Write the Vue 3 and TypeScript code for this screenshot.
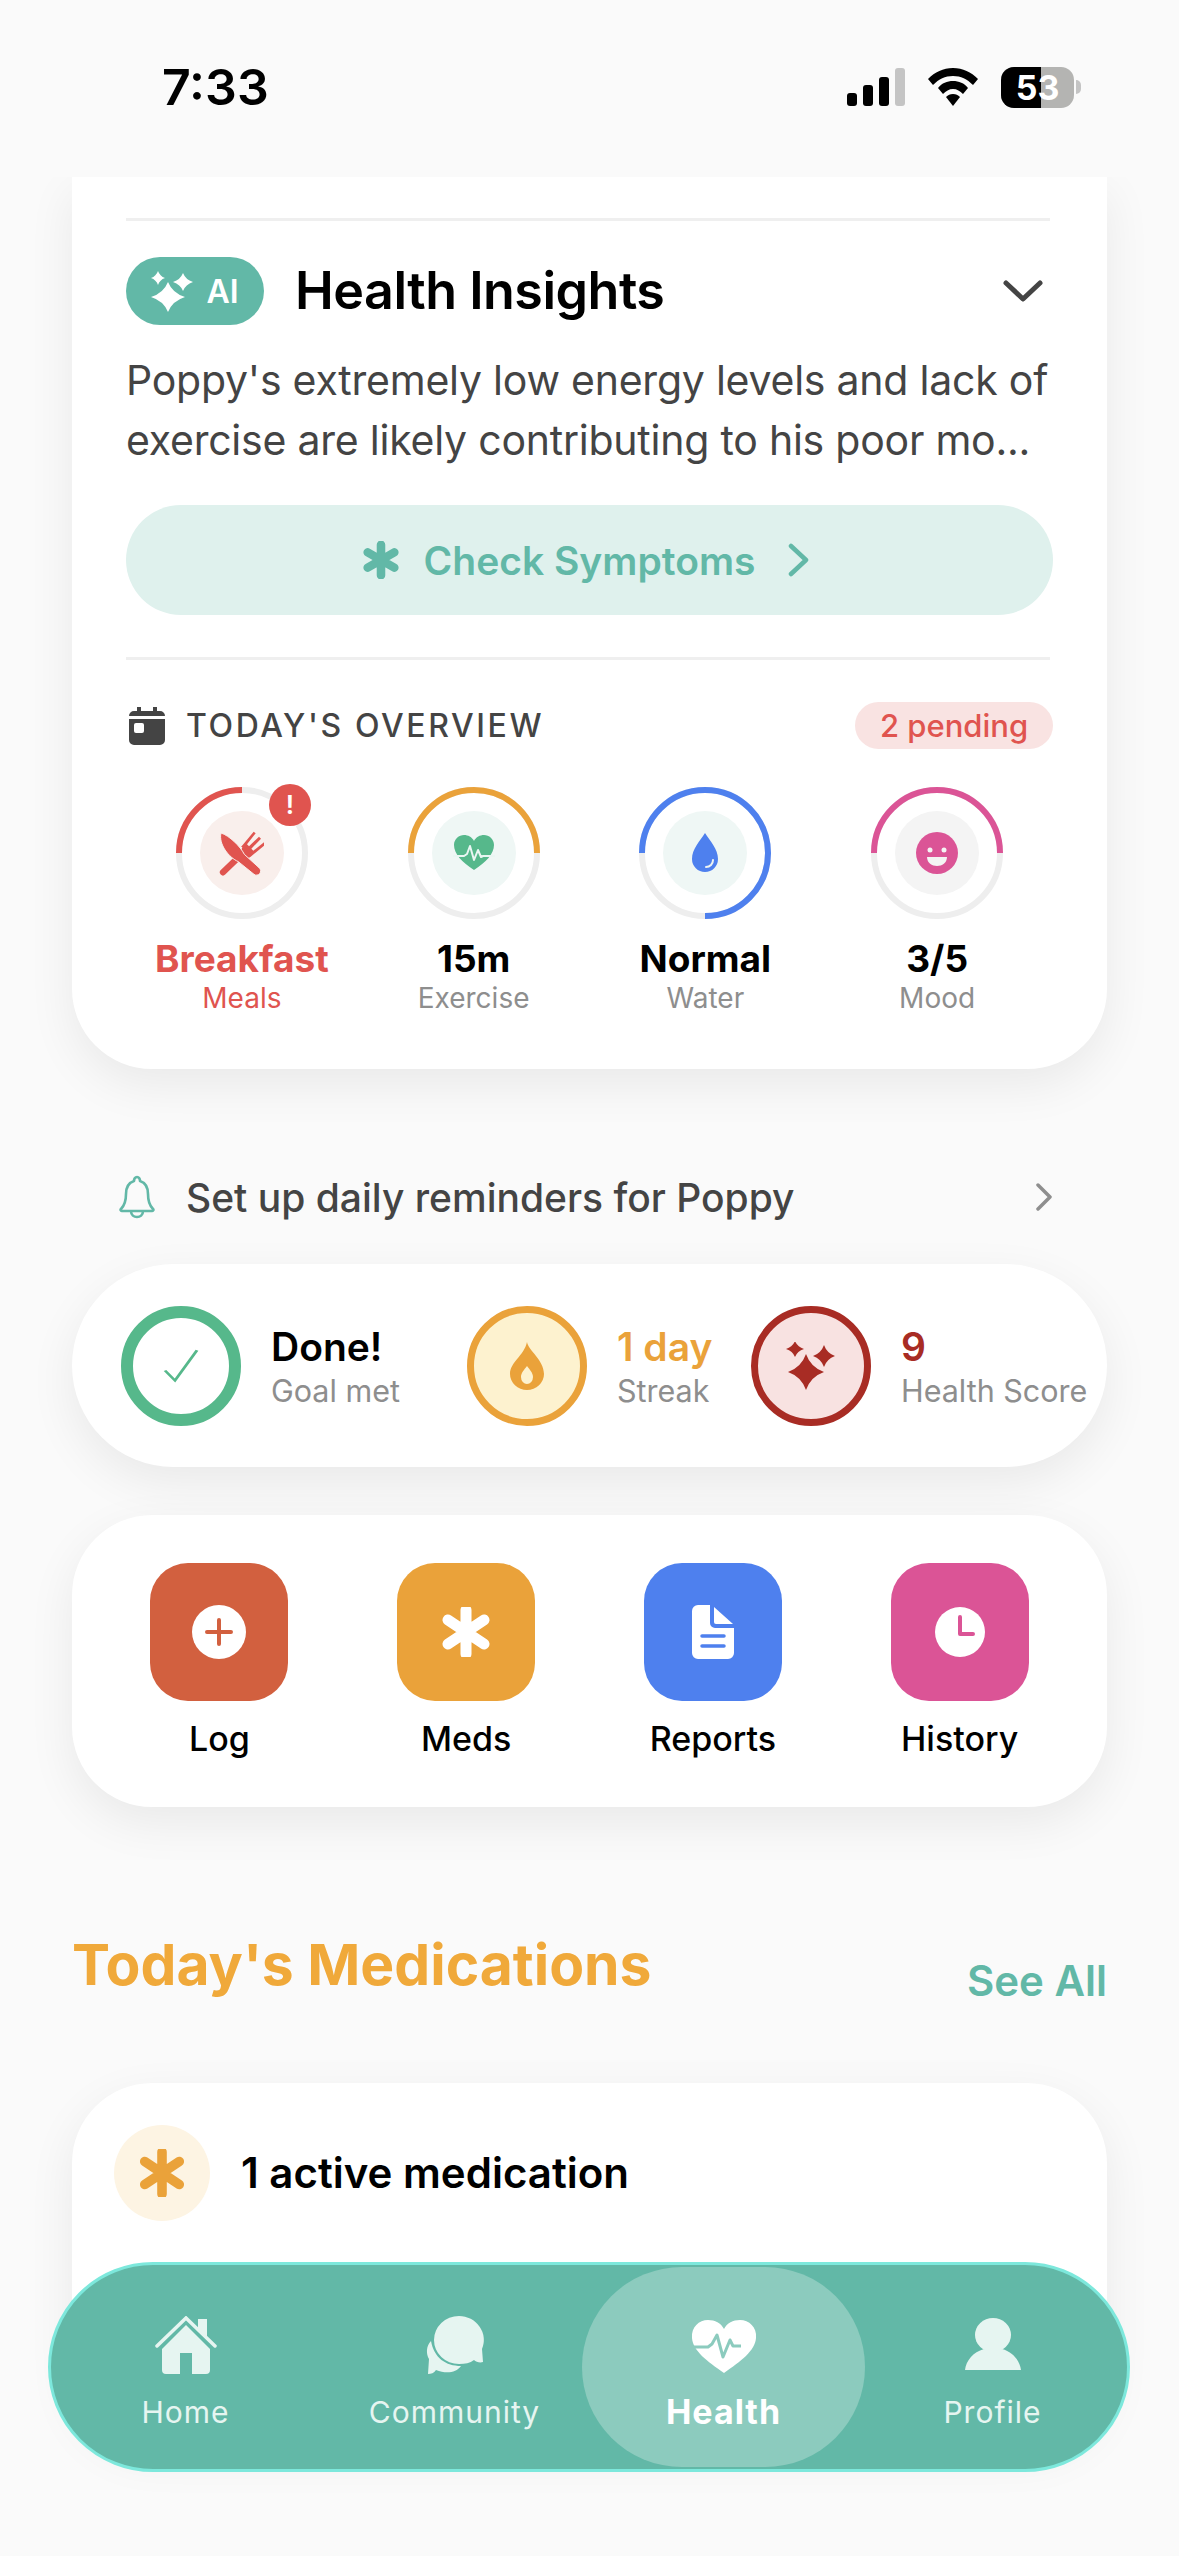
<template>
  <div class="phone">
    <header class="status-bar">
      <span class="time">7:33</span>
      <div class="status-icons">
        <svg class="signal" viewBox="0 0 58 38" width="58" height="38">
          <rect x="0" y="25" width="10" height="13" rx="3" fill="#000" />
          <rect x="16" y="17" width="10" height="21" rx="3" fill="#000" />
          <rect x="32" y="9" width="10" height="29" rx="3" fill="#000" />
          <rect x="48" y="0" width="10" height="38" rx="3" fill="#c4c4c4" />
        </svg>
        <svg class="wifi" viewBox="0 0 52 38" width="52" height="38">
          <path d="M26 0C16 0 8 4 1 11l5 6c6-6 12-9 20-9s14 3 20 9l5-6C44 4 36 0 26 0Z" fill="#000" />
          <path d="M26 13c-6 0-11 2-15 7l5 6c3-3 6-5 10-5s7 2 10 5l5-6c-4-5-9-7-15-7Z" fill="#000" />
          <path d="M26 26c-3 0-5 1-7 3l7 9 7-9c-2-2-4-3-7-3Z" fill="#000" />
        </svg>
        <div class="battery">
          <div class="battery-body">
            <span class="battery-fill"></span>
            <span class="battery-num">53</span>
          </div>
          <span class="battery-tip"></span>
        </div>
      </div>
    </header>

    <main class="scroller">
      <section class="card insights-card">
        <hr class="divider">
        <div class="insights-head">
          <span class="ai-pill">
            <svg viewBox="0 0 42 41" width="42" height="41">
              <path :d="star(17, 26, 17, 15)" fill="#fff" />
              <path :d="star(7, 7, 7, 7)" fill="#fff" />
              <path :d="star(32, 11, 10, 9)" fill="#fff" />
            </svg>
            AI
          </span>
          <h2>Health Insights</h2>
          <svg class="chevron-down" viewBox="0 0 40 24" width="40" height="24">
            <path d="M3 4l17 16L37 4" fill="none" stroke="#444" stroke-width="5" stroke-linecap="round" stroke-linejoin="round" />
          </svg>
        </div>
        <p class="insights-text">
          Poppy's extremely low energy levels and lack of exercise are likely contributing to his poor mo...
        </p>
        <button class="symptoms-btn">
          <svg viewBox="0 0 40 40" width="38" height="38">
            <g stroke="#62b8a7" stroke-width="9" stroke-linecap="round">
              <path d="M20 4v32M6 12l28 16M34 12L6 28" />
            </g>
          </svg>
          <span>Check Symptoms</span>
          <svg class="btn-chevron" viewBox="0 0 24 34" width="24" height="34">
            <path d="M4 3l15 14L4 31" fill="none" stroke="#62b8a7" stroke-width="4.5" stroke-linecap="round" stroke-linejoin="round" />
          </svg>
        </button>
        <hr class="divider second">
        <div class="overview-head">
          <svg viewBox="0 0 36 38" width="36" height="38">
            <path d="M8 0h4v4h12V0h4v4h3a5 5 0 0 1 5 5v24a5 5 0 0 1-5 5H5a5 5 0 0 1-5-5V9a5 5 0 0 1 5-5h3Z" fill="#444" />
            <rect x="0" y="9" width="36" height="3" fill="#fff" />
            <rect x="5" y="16" width="10" height="10" rx="2" fill="#fff" />
          </svg>
          <h3>TODAY'S OVERVIEW</h3>
          <span class="pending">2 pending</span>
        </div>
        <div class="rings">
          <div v-for="ring in rings" :key="ring.label" class="ring-item" :class="{ alert: ring.alert }">
            <div class="ring">
              <svg class="ring-track" viewBox="0 0 132 132" width="132" height="132">
                <circle cx="66" cy="66" r="63" fill="none" stroke="#eeeeee" stroke-width="6" />
                <circle
                  cx="66"
                  cy="66"
                  r="63"
                  fill="none"
                  :stroke="ring.color"
                  stroke-width="6"
                  pathLength="100"
                  :stroke-dasharray="`${ring.progress} 100`"
                  transform="rotate(180 66 66)"
                />
              </svg>
              <div class="ring-inner" :class="ring.tint">
                <svg v-if="ring.icon === 'meal'" viewBox="0 0 135 135" width="45" height="45">
                  <path d="M12 124L72 66" stroke="#e0544f" stroke-width="19" stroke-linecap="round" />
                  <path d="M66 48L104 2l6 5-26 33 6 6 30-29 6 6-29 30 6 6 33-26 5 6-46 38c-8 6-16 4-22-2s-8-14-3-27Z" fill="#e0544f" />
                  <path d="M6 6c25 8 58 40 70 64l44 40a11 11 0 0 1-15 20L58 92C30 80-2 40 6 6Z" fill="#e0544f" stroke="#f9efec" stroke-width="3" />
                </svg>
                <svg v-else-if="ring.icon === 'heart'" viewBox="0 0 44 36" width="44" height="36">
                  <path d="M22 35C10 27 2 19 2 10 2 4 7 0 12 0c4 0 8 2 10 6 2-4 6-6 10-6 5 0 10 4 10 10 0 9-8 17-20 25Z" fill="#56b88b" />
                  <path d="M1 21h11l3-2 3-8 4 14 4-10 3 7 2-1h12" fill="none" stroke="#e9f6f2" stroke-width="2" stroke-linejoin="round" />
                </svg>
                <svg v-else-if="ring.icon === 'drop'" viewBox="0 0 28 40" width="28" height="40">
                  <path d="M14 0C9 8 1 16 1 26a13 13 0 0 0 26 0C27 16 19 8 14 0Z" fill="#4e80ee" />
                  <path d="M15 34c4 0 7-3 7-7" fill="none" stroke="#eef4f2" stroke-width="2" stroke-linecap="round" />
                </svg>
                <svg v-else viewBox="0 0 42 42" width="42" height="42">
                  <circle cx="21" cy="21" r="21" fill="#db5496" />
                  <circle cx="14" cy="18" r="2.5" fill="#f4f4f4" />
                  <circle cx="28" cy="18" r="2.5" fill="#f4f4f4" />
                  <path d="M11 25h20c0 6-5 9-10 9s-10-3-10-9Z" fill="#f4f4f4" />
                </svg>
              </div>
              <span v-if="ring.alert" class="ring-badge">!</span>
            </div>
            <strong>{{ ring.value }}</strong>
            <small>{{ ring.label }}</small>
          </div>
        </div>
      </section>

      <div class="reminder">
        <svg viewBox="0 0 36 44" width="36" height="44">
          <path d="M18 2c-2 0-3 2-3 4-6 2-8 7-8 13 0 6-1 11-5 15-1 1 0 2 1 2h30c1 0 2-1 1-2-4-4-5-9-5-15 0-6-2-11-8-13 0-2-1-4-3-4Z" fill="none" stroke="#62b8a7" stroke-width="2.6" stroke-linejoin="round" />
          <path d="M12 36c0 4 3 6 6 6s6-2 6-6" fill="none" stroke="#62b8a7" stroke-width="2.6" />
        </svg>
        <span>Set up daily reminders for Poppy</span>
        <svg class="reminder-chevron" viewBox="0 0 18 28" width="18" height="28">
          <path d="M3 2l12 12L3 26" fill="none" stroke="#8e8e8e" stroke-width="3.5" stroke-linecap="round" stroke-linejoin="round" />
        </svg>
      </div>

      <section class="card stats-card">
        <div class="stat">
          <div class="stat-circle done">
            <svg viewBox="0 0 36 54" width="36" height="34" preserveAspectRatio="none">
              <path d="M2 34l10 16L34 2" fill="none" stroke="#56b88b" stroke-width="3" />
            </svg>
          </div>
          <div class="stat-text">
            <strong>Done!</strong>
            <small>Goal met</small>
          </div>
        </div>
        <div class="stat">
          <div class="stat-circle streak">
            <svg viewBox="0 0 34 48" width="34" height="48">
              <path fill-rule="evenodd" d="M17 0c1 8 17 18 17 32a17 16 0 0 1-34 0C0 20 14 14 17 0Zm0 24c-3 4-6 7-6 11a6 7 0 0 0 12 0c0-4-3-7-6-11Z" fill="#eaa23a" />
            </svg>
          </div>
          <div class="stat-text">
            <strong class="orange">1 day</strong>
            <small>Streak</small>
          </div>
        </div>
        <div class="stat">
          <div class="stat-circle score">
            <svg viewBox="0 0 50 48" width="50" height="48">
              <path :d="star(20, 30, 18, 18)" fill="#a82c24" />
              <path :d="star(9, 7, 9, 8)" fill="#a82c24" />
              <path :d="star(38, 14, 11, 11)" fill="#a82c24" />
            </svg>
          </div>
          <div class="stat-text">
            <strong class="red">9</strong>
            <small>Health Score</small>
          </div>
        </div>
      </section>

      <section class="card actions-card">
        <div v-for="action in actions" :key="action.label" class="action">
          <div class="tile" :style="{ background: action.color }">
            <svg v-if="action.label === 'Log'" viewBox="0 0 54 54" width="54" height="54">
              <circle cx="27" cy="27" r="27" fill="#fff" />
              <path d="M27 15v24M15 27h24" stroke="#d2603f" stroke-width="4" stroke-linecap="round" />
            </svg>
            <svg v-else-if="action.label === 'Meds'" viewBox="0 0 48 50" width="48" height="50">
              <path d="M24 3v44M6 13l36 24M42 13L6 37" stroke="#fff" stroke-width="11" stroke-linecap="round" />
            </svg>
            <svg v-else-if="action.label === 'Reports'" viewBox="0 0 42 54" width="42" height="54">
              <path d="M6 0h12v18a5 5 0 0 0 5 5h19v25a6 6 0 0 1-6 6H6a6 6 0 0 1-6-6V6a6 6 0 0 1 6-6Z" fill="#fff" />
              <path d="M22 2l19 17H24a2 2 0 0 1-2-2Z" fill="#fff" />
              <path d="M10 31h22M10 41h22" stroke="#4e80ee" stroke-width="3.5" stroke-linecap="round" />
            </svg>
            <svg v-else viewBox="0 0 50 50" width="50" height="50">
              <circle cx="25" cy="25" r="25" fill="#fff" />
              <path d="M25 10v17h13" fill="none" stroke="#db5496" stroke-width="4" stroke-linecap="round" stroke-linejoin="round" />
            </svg>
          </div>
          <span>{{ action.label }}</span>
        </div>
      </section>

      <div class="section-head">
        <h2>Today's Medications</h2>
        <a>See All</a>
      </div>

      <section class="card meds-card">
        <div class="med-icon">
          <svg viewBox="0 0 48 50" width="46" height="48">
            <path d="M24 3v44M6 13l36 24M42 13L6 37" stroke="#eaa23a" stroke-width="10" stroke-linecap="round" />
          </svg>
        </div>
        <span>1 active medication</span>
      </section>
    </main>

    <nav class="tab-bar">
      <div v-for="tab in tabs" :key="tab" class="tab" :class="{ active: tab === 'Health' }">
        <svg v-if="tab === 'Home'" viewBox="0 0 62 58" width="62" height="58">
          <path d="M31 9L7 33v21a4 4 0 0 0 4 4h14V37h12v21h14a4 4 0 0 0 4-4V33Z" fill="#e6f5f1" />
          <path d="M2 30L31 2l29 28" fill="none" stroke="#e6f5f1" stroke-width="3.5" stroke-linecap="round" />
          <path d="M43 3h9v19l-9-9Z" fill="#e6f5f1" />
        </svg>
        <svg v-else-if="tab === 'Community'" viewBox="0 0 58 58" width="58" height="58">
          <path d="M33 0a25 24 0 0 1 23 33l1 13c-3 1-7 0-9-2-4 3-9 4-15 4a25 24 0 0 1 0-48Z" fill="#e6f5f1" />
          <path d="M5 25C0 30 0 38 3 43L2 58c3 0 6-1 8-4 10 4 20 3 25-4C20 50 8 42 5 25Z" fill="#e6f5f1" />
        </svg>
        <svg v-else-if="tab === 'Health'" viewBox="0 0 66 58" width="66" height="58">
          <path d="M33 57C16 45 2 35 1 22 0 11 8 4 17 4c7 0 13 3 16 9 3-6 9-9 16-9 9 0 17 7 16 18-1 13-15 23-32 35Z" fill="#fff" />
          <path d="M0 31h17l4-3 5-9 6 22 7-17 3 6h8" fill="none" stroke="#8ccbbe" stroke-width="3" stroke-linejoin="round" />
        </svg>
        <svg v-else viewBox="0 0 56 58" width="56" height="58">
          <ellipse cx="28" cy="19" rx="18" ry="17" fill="#e6f5f1" />
          <path d="M0 54C1 45 8 36 19 33c3 2 15 2 18 0 11 3 18 12 19 21Z" fill="#e6f5f1" />
        </svg>
        <span>{{ tab }}</span>
      </div>
    </nav>
  </div>
</template>

<script setup lang="ts">
interface Ring {
  value: string
  label: string
  color: string
  progress: number
  icon: string
  tint: string
  alert?: boolean
}

const rings: Ring[] = [
  { value: 'Breakfast', label: 'Meals', color: '#e0544f', progress: 25, icon: 'meal', tint: 'tint-red', alert: true },
  { value: '15m', label: 'Exercise', color: '#eaa23a', progress: 50, icon: 'heart', tint: 'tint-green' },
  { value: 'Normal', label: 'Water', color: '#4e80ee', progress: 75, icon: 'drop', tint: 'tint-green' },
  { value: '3/5', label: 'Mood', color: '#db5496', progress: 50, icon: 'smile', tint: 'tint-grey' },
]

const actions = [
  { label: 'Log', color: '#d2603f' },
  { label: 'Meds', color: '#eaa23a' },
  { label: 'Reports', color: '#4e80ee' },
  { label: 'History', color: '#db5496' },
]

const tabs = ['Home', 'Community', 'Health', 'Profile']

// four pointed sparkle
function star(cx: number, cy: number, rx: number, ry: number): string {
  const ix = rx * 0.26
  const iy = ry * 0.26
  return `M${cx} ${cy - ry}Q${cx + ix} ${cy - iy} ${cx + rx} ${cy}Q${cx + ix} ${cy + iy} ${cx} ${cy + ry}Q${cx - ix} ${cy + iy} ${cx - rx} ${cy}Q${cx - ix} ${cy - iy} ${cx} ${cy - ry}Z`
}
</script>

<style>
html,
body {
  margin: 0;
  background: #fafafa;
}
</style>

<style scoped>
.phone {
  position: relative;
  display: flex;
  flex-direction: column;
  width: 1179px;
  height: 2556px;
  overflow: hidden;
  background: #fafafa;
  font-family: Inter, "Liberation Sans", sans-serif;
  color: #000;
}

.status-bar {
  flex: none;
  display: flex;
  align-items: center;
  justify-content: space-between;
  box-sizing: border-box;
  height: 177px;
  padding: 0 98px 3px 162px;
}

.time {
  font-size: 50px;
  font-weight: 600;
}

.status-icons {
  display: flex;
  align-items: center;
  gap: 22px;
}

.battery {
  display: flex;
  align-items: center;
  gap: 2px;
}

.battery-body {
  position: relative;
  width: 73px;
  height: 41px;
  border-radius: 13px;
  overflow: hidden;
  background: #b4b4b2;
}

.battery-fill {
  position: absolute;
  left: 0;
  top: 0;
  bottom: 0;
  width: 40px;
  background: #000;
}

.battery-num {
  position: absolute;
  inset: 0;
  text-align: center;
  line-height: 41px;
  font-size: 34px;
  font-weight: 700;
  color: #fff;
}

.battery-tip {
  width: 5px;
  height: 14px;
  border-radius: 0 5px 5px 0;
  background: #c4c4c4;
}

.scroller {
  flex: 1;
  min-height: 0;
  overflow: hidden;
}

.card {
  box-sizing: border-box;
  margin: 0 72px;
  background: #fff;
  box-shadow: 0 16px 48px rgba(0, 0, 0, 0.07);
}

.insights-card {
  height: 892px;
  padding: 41px 54px 0;
  border-radius: 0 0 80px 80px;
}

.divider {
  height: 3px;
  margin: 0 3px 0 0;
  border: 0;
  background: #efefef;
}

.divider.second {
  margin-top: 42px;
}

.insights-head {
  display: flex;
  align-items: center;
  margin-top: 36px;
  height: 68px;
}

.ai-pill {
  display: flex;
  align-items: center;
  justify-content: center;
  gap: 13px;
  box-sizing: border-box;
  width: 138px;
  height: 68px;
  border-radius: 34px;
  background: #62b8a7;
  color: #fff;
  font-size: 32px;
  font-weight: 600;
}

.insights-head h2 {
  flex: 1;
  margin: 0 0 2px 31px;
  font-size: 52px;
  font-weight: 600;
  letter-spacing: -0.5px;
}

.chevron-down {
  margin-right: 10px;
}

.insights-text {
  margin: 25px 0 0;
  font-size: 41px;
  letter-spacing: -0.23px;
  line-height: 60px;
  color: #444;
}

.symptoms-btn {
  display: flex;
  align-items: center;
  justify-content: center;
  gap: 24px;
  width: 100%;
  height: 110px;
  margin-top: 35px;
  padding: 0 6px 0 0;
  border: 0;
  border-radius: 55px;
  background: #dff1ed;
  color: #62b8a7;
  font-family: inherit;
  font-size: 39px;
  font-weight: 600;
}

.btn-chevron {
  margin-left: 8px;
}

.overview-head {
  display: flex;
  align-items: center;
  height: 47px;
  margin-top: 42px;
}

.overview-head svg {
  margin-left: 3px;
}

.overview-head h3 {
  flex: 1;
  margin: 0 0 0 21px;
  font-size: 32px;
  font-weight: 500;
  letter-spacing: 2.6px;
  color: #444;
}

.pending {
  display: flex;
  align-items: center;
  justify-content: center;
  width: 198px;
  height: 47px;
  border-radius: 24px;
  background: #f9e3e2;
  color: #e0544f;
  font-size: 31px;
  font-weight: 500;
}

.rings {
  display: grid;
  grid-template-columns: repeat(4, 1fr);
  margin-top: 38px;
}

.ring-item {
  display: flex;
  flex-direction: column;
  align-items: center;
}

.ring {
  position: relative;
  display: flex;
  align-items: center;
  justify-content: center;
  width: 132px;
  height: 132px;
}

.ring-track {
  position: absolute;
  inset: 0;
}

.ring-inner {
  display: flex;
  align-items: center;
  justify-content: center;
  width: 84px;
  height: 84px;
  border-radius: 50%;
}

.tint-red {
  background: #f9efec;
}

.tint-green {
  background: #eff7f5;
}

.tint-grey {
  background: #f4f4f4;
}

.ring-badge {
  position: absolute;
  top: -3px;
  right: -3px;
  width: 42px;
  height: 42px;
  border-radius: 50%;
  background: #e0544f;
  color: #fff;
  text-align: center;
  font-size: 26px;
  font-weight: 600;
  line-height: 42px;
}

.ring-item strong {
  margin-top: 17px;
  font-size: 37px;
  line-height: 46px;
  font-weight: 700;
}

.ring-item small {
  margin-top: -2px;
  font-size: 28px;
  line-height: 36px;
  color: #8e8e8e;
}

.ring-item.alert strong,
.ring-item.alert small {
  color: #e0544f;
}

.reminder {
  display: flex;
  align-items: center;
  height: 60px;
  margin: 98px 72px 37px;
  padding: 0 54px 0 47px;
  color: #444;
  font-size: 39px;
  font-weight: 500;
}

.reminder span {
  flex: 1;
  margin-left: 31px;
}

.stats-card {
  display: grid;
  grid-template-columns: 346px 284px 1fr;
  align-items: center;
  height: 203px;
  padding-left: 49px;
  border-radius: 102px;
}

.stat {
  display: flex;
  align-items: center;
}

.stat-circle {
  flex: none;
  display: flex;
  align-items: center;
  justify-content: center;
  box-sizing: border-box;
  width: 120px;
  height: 120px;
  border-radius: 50%;
}

.stat-circle.done {
  border: 12px solid #56b88b;
}

.stat-circle.streak {
  border: 7px solid #eaa23a;
  background: #fdf2cf;
}

.stat-circle.score {
  border: 7px solid #a82c24;
  background: #f8e2e1;
}

.stat-text {
  display: flex;
  flex-direction: column;
  margin-left: 30px;
}

.stat-text strong {
  margin-top: 1px;
  font-size: 39px;
  line-height: 50px;
  font-weight: 600;
}

.stat-text small {
  font-size: 30.5px;
  line-height: 38px;
  color: #8e8e8e;
}

.orange {
  color: #eaa23a;
}

.red {
  color: #a82c24;
}

.actions-card {
  display: grid;
  grid-template-columns: repeat(4, 1fr);
  height: 292px;
  margin-top: 48px;
  padding: 48px 24px 0;
  border-radius: 80px;
}

.action {
  display: flex;
  flex-direction: column;
  align-items: center;
}

.tile {
  display: flex;
  align-items: center;
  justify-content: center;
  width: 138px;
  height: 138px;
  border-radius: 38px;
}

.action span {
  margin-top: 18px;
  font-size: 34px;
  line-height: 40px;
  font-weight: 500;
}

.section-head {
  display: flex;
  align-items: flex-end;
  justify-content: space-between;
  margin: 124px 72px 0;
}

.section-head h2 {
  margin: 0 0 7px;
  font-size: 57px;
  line-height: 68px;
  font-weight: 700;
  color: #f0a93a;
}

.section-head a {
  font-size: 42px;
  line-height: 50px;
  font-weight: 600;
  color: #62b8a7;
}

.meds-card {
  display: flex;
  align-items: flex-start;
  height: 357px;
  margin-top: 77px;
  padding: 42px;
  border-radius: 80px;
  font-size: 42px;
  font-weight: 600;
}

.meds-card span {
  margin: 24px 0 0 31px;
  line-height: 48px;
}

.med-icon {
  display: flex;
  align-items: center;
  justify-content: center;
  width: 96px;
  height: 96px;
  border-radius: 50%;
  background: #fdf4e3;
}

.tab-bar {
  position: absolute;
  left: 48px;
  bottom: 84px;
  display: grid;
  grid-template-columns: repeat(4, 1fr);
  box-sizing: border-box;
  width: 1082px;
  height: 210px;
  border: 3px solid #7de8dc;
  border-radius: 105px;
  background: #62b8a7;
}

.tab {
  display: flex;
  flex-direction: column;
  align-items: center;
  justify-content: center;
  gap: 18px;
  box-sizing: border-box;
  padding-top: 14px;
  color: #e6f5f1;
  font-size: 30px;
  line-height: 40px;
  letter-spacing: 1px;
}

.tab.active {
  margin: 2px -7px;
  border-radius: 100px;
  background: #8ccbbe;
  color: #fff;
  font-size: 34px;
  font-weight: 700;
}
</style>
